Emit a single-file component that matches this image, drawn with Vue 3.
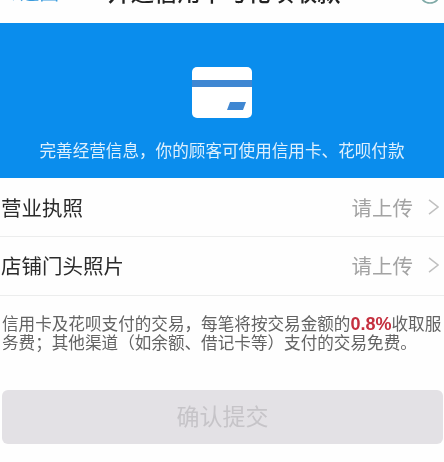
<script setup>
const rows = [
  { label: '营业执照', value: '请上传' },
  { label: '店铺门头照片', value: '请上传' }
]
</script>

<template>
  <div class="page">
    <header class="nav">
      <div class="nav-inner">
        <span class="back">
          <svg class="back-icon" viewBox="0 0 8 18"><path d="M7 1 1.500 9 7 17" /></svg>返回
        </span>
        <span class="title">开通信用卡与花呗收款</span>
        <span class="help-wrap">
          <svg class="help" viewBox="0 0 22 22"><circle cx="11" cy="11" r="10" /></svg>
        </span>
      </div>
    </header>
    <section class="hero">
      <svg class="card" viewBox="0 0 60 51">
        <rect class="card-body" width="60" height="51" rx="5" />
        <rect class="card-band" y="13" width="60" height="7" />
        <path class="card-chip" d="M38 35h16l-3 8H35z" />
      </svg>
      <p class="hero-text">完善经营信息，你的顾客可使用信用卡、花呗付款</p>
    </section>
    <div class="row" v-for="row in rows" :key="row.label">
      <span class="label">{{ row.label }}</span>
      <span class="value">{{ row.value }}</span>
      <svg class="chevron" viewBox="0 0 11 16"><path d="M1 .8 10 8l-9 7.200" /></svg>
    </div>
    <p class="note">信用卡及花呗支付的交易，每笔将按交易金额的<b class="rate">0.8%</b>收取服务费；其他渠道（如余额、借记卡等）支付的交易免费。</p>
    <button class="submit" type="button">确认提交</button>
  </div>
</template>

<style>
html, body { margin: 0; background: #fff; }
</style>

<style scoped>
.page {
  width: 444px;
  height: 462px;
  overflow: hidden;
  background: #fefefe;
  font-family: "Noto Sans CJK SC", "Liberation Sans", sans-serif;
  filter: blur(0.5px);
}
.nav {
  height: 23px;
  overflow: hidden;
  display: flex;
  flex-direction: column;
  justify-content: flex-end;
}
.nav-inner {
  flex-shrink: 0;
  display: grid;
  grid-template-columns: 1fr auto 1fr;
  align-items: center;
  padding: 0 3px 20px 7px;
}
.back {
  display: flex;
  align-items: center;
  gap: 5px;
  color: #3a9bdc;
  font-size: 19.500px;
  line-height: 23px;
}
.back-icon { width: 8px; height: 18px; fill: none; stroke: #3a9bdc; stroke-width: 2; }
.title { font-size: 23.300px; line-height: 23px; color: #222; font-weight: 500; }
.help-wrap { display: flex; justify-content: flex-end; align-self: end; margin-bottom: -1px; }
.help { width: 22px; height: 22px; fill: none; stroke: #7fa9a6; stroke-width: 1.6; }
.hero {
  height: 155px;
  background: #0a8ded;
  display: flex;
  flex-direction: column;
  align-items: center;
  box-sizing: border-box;
  padding-top: 44px;
}
.card { width: 60px; height: 51px; }
.card-body { fill: #fff; }
.card-band { fill: #3f87d2; }
.card-chip { fill: #3f87d2; }
.hero-text {
  margin: 22px 0 0;
  font-size: 16.600px;
  line-height: 20px;
  color: #dff0fd;
}
.row {
  height: 59px;
  box-sizing: border-box;
  display: flex;
  align-items: center;
  border-bottom: 1.500px solid #eceded;
  padding: 0 5px 0 1px;
}
.row + .row { padding-bottom: 2px; }
.label { font-size: 20.500px; color: #2b2b2b; flex: 1; }
.value { font-size: 20.500px; color: #a3a3a3; }
.chevron { width: 11px; height: 16px; margin-left: 15px; fill: none; stroke: #c0c0c0; stroke-width: 1.5; }
.note {
  margin: 18px 0 0;
  padding: 0 1px 0 2px;
  font-size: 16.600px;
  line-height: 18px;
  color: #636363;
}
.rate { color: #c5303f; font-family: "Liberation Sans", sans-serif; font-weight: 700; font-size: 18px; }
.submit {
  display: block;
  width: 441px;
  height: 54px;
  margin: 39px 1px 0 2px;
  border: none;
  border-radius: 6px;
  background: #e3e1e5;
  color: #c6c4c8;
  font-family: inherit;
  font-size: 23px;
  padding: 0 0 4px;
}
</style>
